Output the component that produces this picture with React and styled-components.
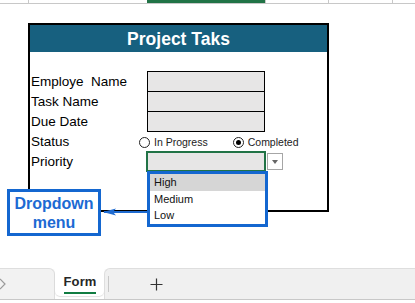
import React from 'react';
import styled, { createGlobalStyle } from 'styled-components';

const Global = createGlobalStyle`
    html, body {
        margin: 0;
        padding: 0;
        background: #fff;
    }
    body {
        font-family: "Liberation Sans", Arial, sans-serif;
        color: #000;
    }
`;

const Page = styled.div`
    width: 415px;
    height: 303px;
    display: flex;
    flex-direction: column;
    overflow: hidden;
    background: #fff;
`;

const GridStrip = styled.div`
    height: 4px;
    display: flex;
    flex: none;
`;

const GridCell = styled.div`
    width: ${p => p.w}px;
    flex: ${p => (p.w ? 'none' : '1')};
    box-sizing: border-box;
    border-bottom: 1px solid #c8c8c8;
    border-left: ${p => (p.edge ? '1px solid #c8c8c8' : 'none')};
    background: ${p => (p.selected ? 'linear-gradient(#217346 0 3px, transparent 3px)' : 'transparent')};
`;

const Sheet = styled.div`
    flex: 1;
    position: relative;
`;

const FormBox = styled.div`
    box-sizing: border-box;
    width: 301px;
    margin: 19px 0 0 28px;
    border: 2px solid #000;
`;

const Title = styled.div`
    height: 27px;
    line-height: 28px;
    background: #17607f;
    color: #fff;
    text-align: center;
    font-weight: bold;
    font-size: 17.5px;
`;

const Body = styled.div`
    padding: 20px 0 38px 0;
`;

const Row = styled.div`
    display: grid;
    grid-template-columns: 117px 118px 1fr;
    height: 20px;
    align-items: stretch;
`;

const Label = styled.div`
    padding-left: 1px;
    font-size: 13.5px;
    line-height: 20px;
    white-space: pre;
`;

const Field = styled.div`
    box-sizing: border-box;
    background: #e7e6e6;
    border: 1px solid #000;
    border-top: ${p => (p.first ? '1px solid #000' : 'none')};
    margin-top: ${p => (p.first ? '-1px' : '0')};
    height: ${p => (p.first ? '21px' : '20px')};
`;

const Options = styled.div`
    grid-column: 2 / 4;
    display: flex;
    align-items: center;
    margin-left: -8px;
    font-size: 10.5px;
    color: #222;
`;

const Option = styled.label`
    display: flex;
    align-items: center;
    gap: 4px;
    margin-right: ${p => p.gap || 0}px;
`;

const Radio = styled.span`
    box-sizing: border-box;
    width: 11px;
    height: 11px;
    border-radius: 50%;
    border: 1px solid #222;
    background: #fff;
    display: flex;
    align-items: center;
    justify-content: center;

    &::after {
        content: '';
        width: 5px;
        height: 5px;
        border-radius: 50%;
        background: ${p => (p.checked ? '#000' : 'transparent')};
    }
`;

const PriorityCell = styled.div`
    position: relative;
`;

const SelectField = styled.div`
    box-sizing: border-box;
    width: 120px;
    height: 21px;
    margin: -1px 0 0 -1px;
    background: #e7e6e6;
    border: 2px solid #217346;
`;

const ArrowButton = styled.div`
    box-sizing: border-box;
    width: 16px;
    height: 17px;
    margin: 1px 0 0 2px;
    background: #fff;
    border: 1px solid #a6a6a6;
    display: flex;
    align-items: center;
    justify-content: center;

    &::after {
        content: '';
        border-left: 3.5px solid transparent;
        border-right: 3.5px solid transparent;
        border-top: 4px solid #666;
    }
`;

const Menu = styled.ul`
    position: absolute;
    left: 0;
    top: 19px;
    z-index: 2;
    box-sizing: border-box;
    width: 121px;
    height: 56px;
    margin: 0;
    padding: 0;
    list-style: none;
    background: #fff;
    border: 3px solid #1467d0;
`;

const MenuItem = styled.li`
    height: 16.7px;
    line-height: 17px;
    padding-left: 4px;
    font-size: 11px;
    color: #111;
    background: ${p => (p.active ? '#d6d6d6' : 'transparent')};
`;

const Callout = styled.div`
    position: absolute;
    left: 7px;
    top: 185px;
    z-index: 2;
    box-sizing: border-box;
    width: 94px;
    height: 47px;
    border: 3px solid #1467d0;
    background: #fff;
    color: #1c6ad3;
    font-weight: bold;
    font-size: 16px;
    line-height: 19px;
    text-align: center;
    padding-top: 2px;
`;

const Pointer = styled.svg`
    position: absolute;
    left: 101px;
    top: 203px;
    z-index: 2;
`;

const TabBar = styled.div`
    height: 32px;
    flex: none;
    display: flex;
    box-sizing: border-box;
    border-bottom: 1px solid #c8c8c8;
    background: #fff;
`;

const NavArea = styled.div`
    width: 55px;
    box-sizing: border-box;
    background: #f2f2f2;
    border-top: 1px solid #dedede;
    border-right: 1px solid #dedede;
    border-top-right-radius: 6px;
    display: flex;
    align-items: center;
`;

const ActiveTab = styled.div`
    width: 49px;
    box-sizing: border-box;
    background: #fff;
    margin-bottom: 3px;
    border-bottom-left-radius: 5px;
    border-bottom-right-radius: 5px;
    box-shadow: 0 1px 1px rgba(0, 0, 0, 0.12);
    display: flex;
    justify-content: center;
    padding-left: 1px;
`;

const TabLabel = styled.span`
    margin-top: 5px;
    height: 19px;
    font-size: 13px;
    font-weight: bold;
    color: #262626;
    letter-spacing: 0.1px;
    border-bottom: 2px solid #107c41;
    line-height: 17px;
`;

const RestArea = styled.div`
    flex: 1;
    box-sizing: border-box;
    background: #f0f0f0;
    border-top: 1px solid #dedede;
    border-left: 1px solid #dedede;
    border-top-left-radius: 6px;
    display: flex;
    align-items: center;
`;

const Divider = styled.div`
    width: 1px;
    height: 16px;
    margin-left: 3px;
    background: #c8c8c8;
`;

const AddButton = styled.div`
    margin-left: 41px;
    display: flex;
    align-items: center;
`;

const Footer = styled.div`
    flex: none;
    height: 3px;
    background: #fff;
`;

const Chevron = () => (
    <svg width="8" height="12" viewBox="0 0 8 12" style={{ marginLeft: -1 }}>
        <path d="M1 1 L6 6 L1 11" fill="none" stroke="#9a9a9a" strokeWidth="1.2" />
    </svg>
);

const Plus = () => (
    <svg width="13" height="13" viewBox="0 0 13 13">
        <path d="M6.5 0.5 V12.5 M0.5 6.5 H12.5" stroke="#333" strokeWidth="1.2" />
    </svg>
);

const App = () => (
    <React.Fragment>
        <Global />
        <Page>
            <GridStrip>
                <GridCell w={28} />
                <GridCell w={119} edge />
                <GridCell w={118} selected />
                <GridCell w={63} edge />
                <GridCell w={64} edge />
                <GridCell edge />
            </GridStrip>

            <Sheet>
                <FormBox>
                    <Title>Project Taks</Title>
                    <Body>
                        <Row>
                            <Label>{'Employe  Name'}</Label>
                            <Field first />
                        </Row>
                        <Row>
                            <Label>Task Name</Label>
                            <Field />
                        </Row>
                        <Row>
                            <Label>Due Date</Label>
                            <Field />
                        </Row>
                        <Row>
                            <Label>Status</Label>
                            <Options>
                                <Option gap={25}>
                                    <Radio />
                                    In Progress
                                </Option>
                                <Option>
                                    <Radio checked />
                                    Completed
                                </Option>
                            </Options>
                        </Row>
                        <Row>
                            <Label>Priority</Label>
                            <PriorityCell>
                                <SelectField />
                                <Menu>
                                    <MenuItem active>High</MenuItem>
                                    <MenuItem>Medium</MenuItem>
                                    <MenuItem>Low</MenuItem>
                                </Menu>
                            </PriorityCell>
                            <div>
                                <ArrowButton />
                            </div>
                        </Row>
                    </Body>
                </FormBox>

                <Callout>
                    Dropdown
                    <br />
                    menu
                </Callout>
                <Pointer width="46" height="10" viewBox="0 0 46 10">
                    <path d="M3 5 H46" stroke="#1f6bd0" strokeWidth="2" />
                    <path d="M2 5 L15 1.5 L12 5 L15 8.5 Z" fill="#1f6bd0" />
                </Pointer>
            </Sheet>

            <TabBar>
                <NavArea>
                    <Chevron />
                </NavArea>
                <ActiveTab>
                    <TabLabel>Form</TabLabel>
                </ActiveTab>
                <RestArea>
                    <Divider />
                    <AddButton>
                        <Plus />
                    </AddButton>
                </RestArea>
            </TabBar>
            <Footer />
        </Page>
    </React.Fragment>
);

export default App;
